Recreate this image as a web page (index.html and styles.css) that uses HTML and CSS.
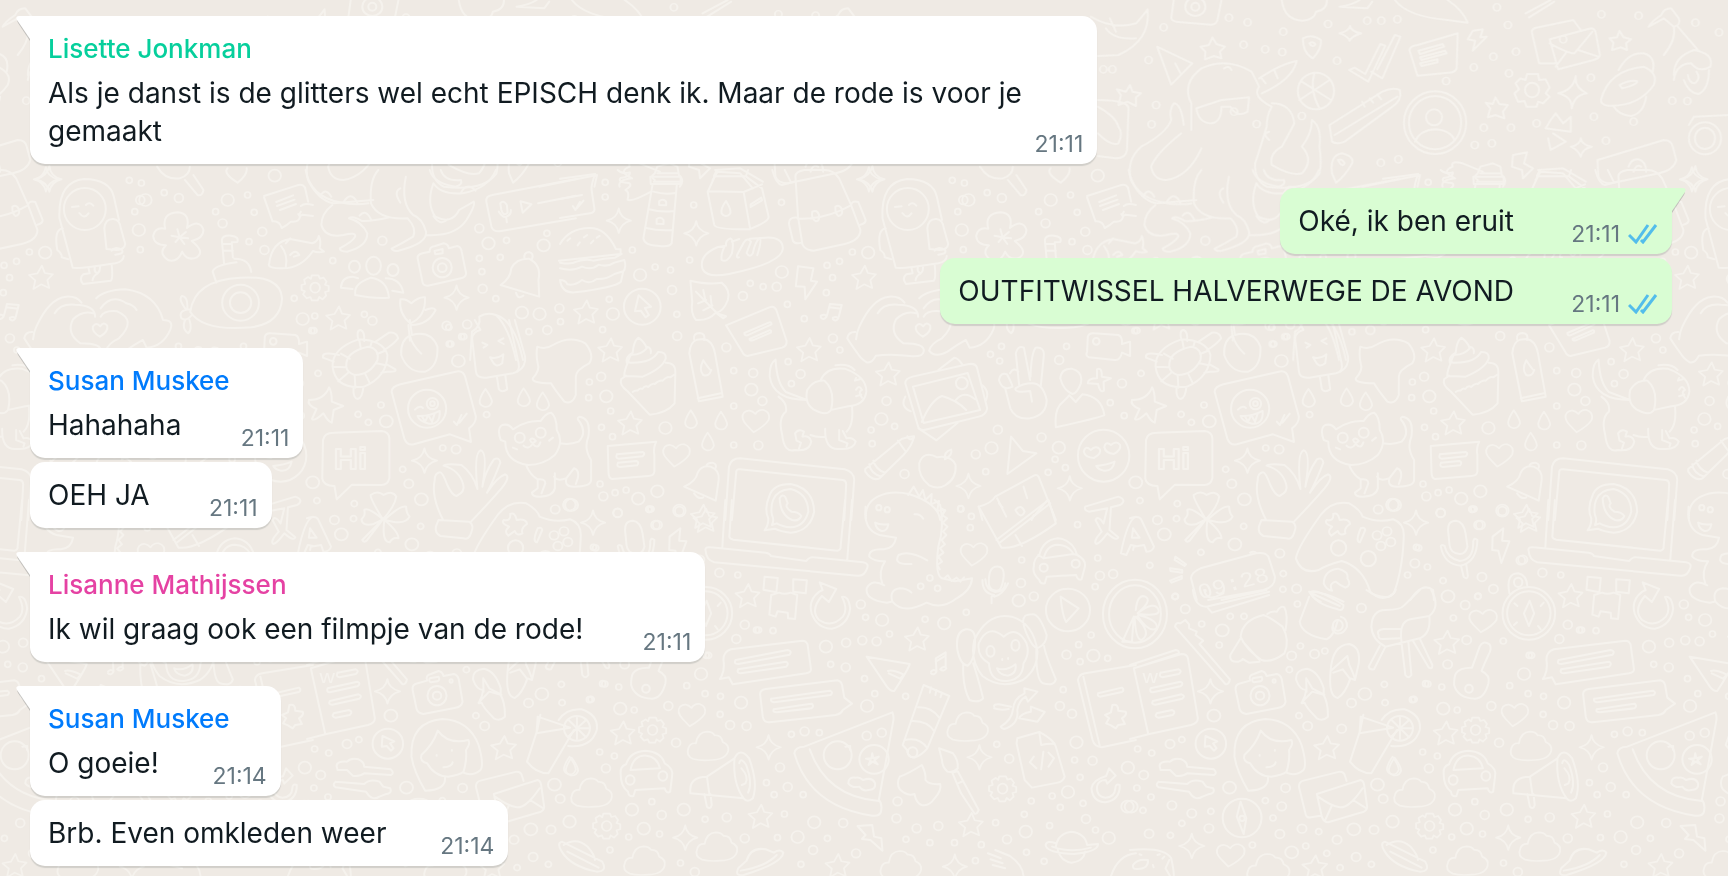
FILE: index.html
```html
<!DOCTYPE html>
<html lang="nl">
<head>
<meta charset="utf-8">
<meta name="viewport" content="width=device-width, initial-scale=1">
<title>Groepschat</title>
<link rel="stylesheet" href="styles.css">
</head>
<body>
<svg class="wallpaper" aria-hidden="true">
  <defs>
    <marker id="dot-s" markerUnits="userSpaceOnUse"><ellipse rx="8" ry="9"/></marker>
    <marker id="dot-m" markerUnits="userSpaceOnUse"><ellipse rx="12" ry="13"/></marker>
    <marker id="dot-l" markerUnits="userSpaceOnUse"><ellipse rx="17" ry="18"/></marker>
    <marker id="dot-w" markerUnits="userSpaceOnUse"><ellipse class="wide" rx="7" ry="11"/></marker>
    <marker id="star" markerUnits="userSpaceOnUse"><path d="M3-36L11-14L33-10L18 7L23 31L1 20L-20 34L-15 8L-32-8L-9-13Z"/></marker>
    <marker id="spark" markerUnits="userSpaceOnUse"><path d="M0-37Q3-8 33 0Q6 7 0 37Q-5 7-33 0Q-5-6 0-37Z"/></marker>
    <marker id="gear" markerUnits="userSpaceOnUse"><path d="M-9-37H9L13-27L23-30L31-18L27-9L37-5V10L27 13L30 24L20 35L11 28L7 38H-9L-13 28L-23 32L-33 20L-28 11L-37 7V-8L-27-11L-30-24L-19-32L-12-26Z"/><ellipse rx="13" ry="15"/></marker>
    <marker id="cloud" markerUnits="userSpaceOnUse"><path d="M-40 39Q-62 30-53 5Q-48-10-33-8Q-28-42-3-43Q12-43 18-32Q36-34 40-12Q58-4 55 14Q50 40 10 42Q-20 45-40 39Z"/></marker>
    <marker id="heart" markerUnits="userSpaceOnUse"><path d="M-2-20Q-18-38-33-24Q-44-8-26 13L-7 35Q25 15 34-2Q40-25 20-32Q6-34-2-20Z"/></marker>
    <marker id="drop" markerUnits="userSpaceOnUse"><path d="M0-27Q17 0 17 12Q12 29-3 26Q-17 21-15 7Q-12-8 0-27Z"/></marker>

    <g id="tile">
      <!-- lighthouse, food, backpack, astronaut, pets -->
      <g transform="translate(560 170) scale(.3673 .3333)">
        <path d="M0 26L96 12Q84 45 86 60L94 118Q93 128 82 130L0 144M0 87L60 75M35 108L42 120L54 96M46 115L64 92"/>
        <path d="M252 43L227 205Q230 226 265 227Q298 233 304 220L318 45M246 20H328L329 42H247ZM254 65Q285 75 314 69M243 118Q275 128 310 123M235 174Q270 184 307 180M270 105V94Q280 84 289 95V106ZM263 161V148Q273 137 282 150V162ZM157 0Q170 14 190 7Q193 20 165 24Q155 37 187 39Q200 45 178 60Q190 65 184 89Q195 97 248 65"/>
        <path d="M402 66L420 165Q425 179 515 178Q570 155 568 140L550 55L506 19L422 18ZM402 64L500 66L550 43M500 66L518 178M419 18L427 0M506 19L512 0M452 93Q470 125 462 133Q450 145 440 130Q437 115 452 93M519 103L548 83L550 91L519 111Z"/>
        <path d="M641 20L648 140L660 223Q667 240 690 242L775 222Q818 210 818 180L792 104L760 25Q745 0 720 0H665Q640 5 641 20M647 146Q720 150 792 106Q795 90 812 96L832 150Q833 160 818 164M647 143Q620 140 624 165L634 212Q640 224 658 218M687 125Q700 118 705 134Q708 153 697 154Q683 145 687 125M750 110Q762 102 768 120Q770 137 758 138Q748 130 750 110M578 0Q588 42 604 45L642 34M612 0L628 35"/>
        <path d="M0 222Q25 175 80 174Q125 173 152 237L165 238V252L-3 272M0 278Q30 285 45 275Q70 265 90 272Q120 264 150 263L168 252M0 295Q35 305 60 290Q85 302 105 284Q130 292 148 278L175 270Q182 290 172 305L166 335Q150 352 40 367Q5 370 0 330Q15 330 20 343Q40 348 60 330Q80 345 100 327Q125 329 148 312L172 304M20 212L28 205M48 226L54 217M65 202L74 195M84 220L91 212M100 203L108 198"/>
        <path d="M388 297Q377 255 430 231L452 227Q450 210 464 205Q475 210 468 250Q455 280 440 270Q437 255 448 229M487 262Q480 265 482 255L500 218Q510 200 520 215L508 249Q517 265 525 250Q531 215 544 204Q550 210 537 256M560 203Q605 200 607 235Q605 280 460 312Q400 325 388 297M468 215L488 207M516 206L560 203"/>
        <path d="M648 289L690 295L683 332L700 335L668 388L666 350L642 349Z"/>
        <path d="M355 332Q405 345 440 338Q465 360 457 390Q445 425 424 429L452 439L444 445L424 428Q405 453 370 450Q355 430 360 395ZM370 365L425 427M390 360L396 392M376 400L398 390M410 378L413 408M390 421L415 407"/>
        <path d="M452 466L570 412Q583 406 589 420L617 513Q618 528 605 533L510 558Q500 557 496 545ZM502 489L568 458Q575 454 576 463L510 496Q502 498 502 489M516 507L570 481Q577 480 574 488L525 511Q516 513 516 507"/>
        <ellipse cx="224" cy="410" rx="50" ry="54"/><path d="M214 376L204 424L220 422L233 442L242 435L231 414L248 410Z"/>
        <path d="M710 437Q722 430 726 440Q718 452 710 443V437M727 436L735 402L767 405L759 440M734 412L765 416M743 443Q754 438 758 445Q750 456 743 448Z"/>
        <path d="M914 293L878 145Q873 35 945 27Q1015 28 1026 80L1040 150M914 293Q930 298 1030 280Q1052 275 1053 258M1006 237L1000 175Q1003 145 1025 147Q1043 150 1045 175L1057 222Q1055 240 1034 240ZM1020 242Q1030 228 1048 240Q1055 252 1030 254M887 175Q862 180 872 240Q885 250 884 262L902 268M912 111L930 109M950 105Q960 94 970 107M932 129Q945 149 957 130M957 294L960 310L943 313Q930 325 942 342L1018 332Q1024 325 1020 283M975 290Q970 305 982 310Q990 303 988 288M968 331Q970 317 982 310"/><ellipse cx="947" cy="117" rx="57" ry="63"/>
        <path d="M1166 176Q1155 130 1200 127Q1235 130 1225 174Q1260 145 1270 180Q1270 205 1238 213Q1275 245 1252 262Q1225 275 1212 245Q1200 278 1175 271Q1145 250 1168 226Q1135 225 1133 198Q1138 170 1166 176M1205 202L1199 178M1205 202L1222 186M1205 202L1228 205M1205 202L1218 222M1205 202L1194 216M1205 202L1183 197"/>
        <path d="M1435 78L1525 46Q1545 40 1548 60L1555 95M1435 82L1458 154Q1478 153 1483 174Q1498 166 1508 155Q1530 158 1533 140L1528 132M1468 96L1514 76M1470 108L1518 89M1478 120L1522 102M1535 125Q1525 145 1540 134L1568 138M1535 108Q1545 98 1568 105"/>
        <path d="M1320 210Q1322 195 1345 197Q1368 200 1362 216L1347 217L1350 262M1320 210L1326 280M1321 222H1347M1324 242H1350M1354 266Q1395 265 1400 306M1305 338L1295 305Q1300 285 1360 277M1234 426Q1245 330 1370 323Q1480 315 1484 385Q1480 460 1400 472Q1270 485 1234 426M1234 418Q1200 420 1210 445Q1225 455 1238 435M1222 418Q1200 385 1212 378Q1228 380 1226 415M1220 450Q1210 475 1228 490Q1240 480 1232 450"/><ellipse cx="1371" cy="398" rx="50" ry="54"/><ellipse cx="1371" cy="398" rx="29" ry="31"/>
        <path d="M182 578Q178 560 198 548Q200 515 213 503Q230 515 236 535Q220 555 195 554M236 530Q250 532 247 550M197 549Q180 575 190 578Q250 580 267 546Q290 545 288 565Q280 595 225 620Q195 618 175 618Q175 600 185 578M288 578Q315 578 314 608L312 700Q290 730 244 734L184 664Q160 645 167 627L180 617M198 666Q205 660 211 662Q218 652 224 657Q232 645 240 651Q250 639 258 642Q270 630 280 632Q292 618 300 622L314 612"/>
        <path d="M352 550Q355 515 373 509L390 507Q415 510 422 550L443 680L378 694ZM365 508Q362 490 380 489Q397 490 392 510M375 685L438 670M390 571Q410 605 412 600Q405 622 390 615Q377 600 390 571"/>
        <path d="M673 690Q580 690 571 620Q570 580 587 569Q590 640 615 666L672 690M595 680Q620 700 615 725Q593 745 605 795Q610 850 640 840Q680 845 684 815Q680 795 660 800L664 785Q650 775 640 790L644 812L656 818L650 838M682 795Q700 803 722 800M722 776Q720 840 760 837Q800 840 805 815Q795 800 780 805L770 783M760 780V810L783 820L780 830M795 710Q800 765 780 785M673 660Q690 630 720 632Q750 660 738 720Q725 740 690 718Q665 700 673 660M710 630Q725 590 775 596Q835 620 834 665Q830 705 785 709L742 719M750 586Q785 580 802 600M806 624L803 632L816 628M806 659Q815 642 822 660Q810 665 822 683M806 679L820 674"/>
        <path d="M806 508Q808 485 815 470Q850 385 896 380Q925 378 938 398M865 430Q880 400 920 404Q975 405 975 440M970 430Q940 420 915 448Q895 490 935 520Q995 520 990 545Q988 560 960 559Q900 550 860 557Q850 580 835 577Q820 568 810 550Q790 520 782 505Q785 485 804 486M978 385Q1000 360 1058 358Q1140 370 1160 450Q1190 450 1180 478Q1160 530 1115 533L1105 510Q1080 525 1055 545Q1020 565 1005 542Q1010 520 1040 505Q1090 450 1035 424Q1000 420 990 440M990 415Q1020 370 1060 400Q1080 405 1088 420M989 469Q978 455 969 470Q965 485 988 500Q1012 484 1008 467Q998 453 989 469"/>
        <path d="M940 640Q940 625 960 620L1110 583Q1130 578 1135 592L1163 715Q1160 735 1140 740L1000 778Q980 785 975 770ZM961 650L1110 609L1144 720L990 759ZM985 756Q1010 690 1040 678Q1080 690 1106 720M1078 690Q1100 660 1130 688M1030 600L1074 563Q1085 565 1095 583M976 775L1025 811L1082 759M940 680Q925 710 955 724M1150 646Q1170 665 1160 690"/><ellipse cx="1094" cy="640" rx="16" ry="18"/>
        <path d="M1212 655L1226 715Q1240 750 1280 745Q1325 735 1325 690Q1315 640 1285 640Q1260 640 1240 655Q1237 670 1280 663L1285 695M1250 645L1241 550Q1246 525 1263 533L1280 630M1281 620Q1283 550 1295 533Q1320 530 1317 560L1309 648M1195 630Q1200 605 1217 613Q1230 640 1232 650Q1205 665 1195 630M1225 610Q1235 590 1248 605"/>
        <path d="M1362 625Q1365 595 1393 596Q1425 605 1418 640Q1408 670 1395 672Q1370 660 1362 625M1350 770Q1345 715 1370 695L1387 676L1404 696L1422 673Q1475 680 1482 735Q1480 740 1350 772"/>
        <path d="M1462 598Q1476 590 1475 620L1500 625L1480 635L1481 662Q1470 670 1465 642L1437 640Q1437 625 1462 625Z"/>
        <path d="M1437 500Q1440 488 1455 490L1520 495Q1532 500 1530 522L1552 515V558L1530 548Q1525 572 1510 570L1440 562Q1430 558 1435 545Z"/><ellipse cx="1460" cy="514" rx="9" ry="10"/>
        <path d="M130 828L262 815Q253 835 257 855V905Q255 918 240 918L142 927Q132 925 132 905ZM155 853L225 846Q234 850 225 859L160 866Q150 865 155 853M158 878L208 873Q217 877 210 886L163 891Q152 890 158 878"/>
        <path d="M338 950Q370 935 375 908Q385 885 410 890Q435 900 432 930L424 992ZM398 889Q400 878 415 878Q430 883 422 898M365 970Q378 990 390 982"/>
        <path d="M450 1050L460 890Q465 865 490 865L775 898Q800 905 801 930L793 1050M468 1050L480 905Q480 897 490 898L770 930Q780 932 779 945L774 1050"/>
        <path d="M831 897L930 807Q950 800 964 799Q960 825 935 855L870 925Q850 935 831 905ZM842 883Q845 910 875 920M853 872Q860 900 885 908M920 812L940 843M946 799Q950 815 964 803"/>
        <path d="M1027 862Q990 840 978 880Q975 920 1005 946Q1030 960 1050 945Q1080 925 1077 885Q1065 855 1027 862M1048 868Q1045 845 1065 839Q1070 855 1048 868"/>
        <path d="M1228 800L1218 912L1297 850L1260 843Z"/>
        <ellipse cx="1480" cy="857" rx="70" ry="78"/><path d="M1426 845Q1430 825 1445 840Q1460 825 1470 838Q1475 850 1454 864Q1430 862 1426 845M1482 832Q1485 812 1500 825Q1515 810 1525 825Q1528 840 1508 852Q1485 850 1482 832M1460 888Q1490 885 1510 875Q1505 905 1480 902Q1465 898 1460 888"/>
        <path d="M833 1050Q828 1000 865 980Q900 960 950 972Q1030 1000 1035 1050M948 975L963 950L978 980L988 960L995 990L1012 972L1010 1003L1032 993L1027 1022L1048 1020L1038 1042"/>
        <path d="M1185 980L1290 917Q1298 912 1303 920L1350 1050M1140 1010Q1175 1000 1185 980M1140 1010L1150 1050M1190 985L1215 1040M1262 950L1272 985M1284 1046L1328 990"/>
        <polyline class="stars" points="827,323 70,427 136,541 190,760 677,540 892,613 388,1040"/>
        <polyline class="sparks" points="160,152 371,190 841,28 1112,948 1388,955"/>
        <polyline class="hearts" points="534,752 318,855"/>
        <polyline class="drops" points="356,748 438,752 402,815"/>
        <polyline class="dots-s" points="123,37 123,81 364,105 603,97 197,240 259,291 301,300 353,270 518,340 553,350 318,433 134,388 619,403 665,446 116,479 796,246 761,274 727,286 742,323 725,368 1068,31 1101,39 1163,68 1083,125 1098,239 1303,125 1408,127 1390,75 1394,215 473,602 621,575 762,540 78,683 80,636 138,723 113,772 143,800 473,708 473,825 630,641 911,769 847,780 850,821 1172,553 1202,529 1197,573 1379,529 1498,698 1536,737 1159,905 1329,907 1348,868 1376,893 109,942 150,968 180,960 242,1018 1091,1016"/>
        <polyline class="dots-m" points="498,378 590,350 305,360 1203,84 1322,160 1430,185 1436,240 1098,90 319,498 453,532 551,693 526,609 540,826 112,620 655,612 889,693 938,912 1132,853 1192,779 1311,802 1530,640 1359,570 118,979 157,1028 325,1023 743,505"/>
        <polyline class="dots-l" points="218,315 144,432 839,248 1112,90 1336,90 1094,180 1464,17 604,306 521,659 126,679 287,774 875,747 1175,834 1358,833 213,986 265,964 26,1004"/>
      </g>

      <!-- laptop, dinosaur, pizza, monkey -->
      <g transform="translate(560 500) scale(.3673 .3333)">
        <path d="M450 0L442 140M468 0L461 110Q462 117 472 119L755 152Q765 150 764 140L776 0M795 0L782 180M396 150Q395 140 410 142L560 158Q572 160 574 168L670 183Q680 170 690 172L825 187Q842 190 836 205Q828 230 810 227L420 187Q398 180 396 150"/>
        <path d="M570 -12Q580-48 628-48Q690-35 692 35Q680 95 628 98Q600 95 585 86L557 91Q568 75 567 55Q555 25 570-12M580 0Q590-30 628-33Q675-20 676 35Q665 80 628 82Q605 80 590 70L577 75Q584 60 577 45Q573 20 580 0M598-5Q605-20 614-8L620 10Q610 20 630 35Q650 35 657 48Q650 65 632 60Q600 45 598-5"/>
        <path d="M832 20Q825 90 870 105L915 113Q910 145 882 148Q840 145 842 170Q855 185 885 184Q865 215 878 252M1000 181Q950 150 922 165Q905 195 957 192M1020 0L1035 15Q1047 80 1030 140Q1020 225 1040 235L1075 244L1122 235Q1120 270 1080 295Q1040 330 998 308Q935 345 905 305Q895 270 925 265Q945 265 957 278M883 256Q850 235 835 265Q830 300 890 308L902 305M965 43Q980 40 989 56M858 68Q870 76 894 73Q890 95 875 93Q860 87 858 68M1038 25L1049 32L1040 45L1054 55L1042 68L1055 80L1043 95L1052 105L1039 120L1048 133L1035 145L1044 158L1030 170L1040 185L1027 195L1034 208M1045 236L1056 226L1066 243L1080 233L1090 245L1100 232"/><ellipse cx="868" cy="23" rx="7" ry="8"/><ellipse cx="891" cy="29" rx="7" ry="8"/>
        <path d="M1140 20L1202 143Q1250 150 1350 70L1330 0M1188 120L1330 0M1195 130L1335 10M1240 105L1258 138M1240 30Q1255 10 1265 35Q1255 60 1240 30M1195 10L1205 22M1290 45L1284 60"/>
        <path d="M1430 20L1520-10Q1545 0 1525 15L1500 22L1496 90L1520 112Q1515 125 1490 100Q1470 130 1460 132Q1450 125 1475 95L1458 60Q1465 45 1480 70L1490 25L1440 35Q1425 30 1430 20M1568 50Q1545 60 1527 160L1542 165L1554 135L1568 138"/>
        <path d="M1290 200Q1290 175 1305 165Q1315 120 1355 115Q1395 118 1408 165Q1435 180 1428 205L1420 238Q1410 243 1405 225L1325 230L1320 250Q1308 253 1305 240Q1285 220 1290 200M1317 175Q1325 135 1355 134Q1385 135 1398 162ZM1302 165L1317 175M1398 162L1410 166"/><ellipse cx="1317" cy="203" rx="11" ry="12"/><ellipse cx="1404" cy="191" rx="11" ry="12"/>
        <path d="M1168 255Q1165 205 1185 200Q1210 195 1208 230Q1203 275 1188 272Q1172 272 1168 255M1150 240Q1150 280 1182 285L1175 290V310M1220 250Q1205 285 1182 290M1158 238Q1160 270 1185 276M1212 250Q1210 275 1185 276"/>
        <path d="M557 230L593 234L589 277L554 269ZM635 238L672 241L669 280L635 275ZM597 278Q610 285 628 278L646 285L640 357L621 355L620 338L592 334L587 350L570 344L575 285Z"/>
        <path d="M706 275Q675 300 685 340Q700 385 740 386Q785 375 790 325Q785 285 768 291Q785 330 770 350Q740 385 705 360Q680 330 713 288L732 306L752 267L707 247L715 270Z"/>
        <path d="M435 537Q450 515 445 480Q445 455 465 448L660 422Q670 422 674 433L683 505Q685 517 670 520L470 553L460 532ZM478 480L620 450Q633 453 625 464L485 492Q472 492 478 480M485 508L615 485Q625 490 616 500L492 520Q480 520 485 508"/>
        <path d="M545 585Q543 570 560 567L755 541Q765 543 768 555L774 593L795 611L770 630Q765 642 750 645L570 667Q555 668 552 650ZM575 596L735 572Q745 577 737 585L583 607Q572 605 575 596M582 628L685 611Q693 618 685 625L590 637Q578 637 582 628"/>
        <path d="M835 470L952 492Q950 505 910 573Q900 575 890 560ZM893 513Q905 508 936 524L926 536L895 520"/>
        <path d="M1010 515Q1018 505 1025 515Q1018 528 1010 520M1025 515L1023 475L1050 457V503M1023 485L1050 467M1035 508Q1045 495 1052 505Q1045 517 1035 508"/>
        <path d="M1128 420Q1115 480 1150 528Q1200 570 1260 540Q1300 510 1300 455Q1290 370 1230 350Q1165 335 1128 420M1208 410Q1165 370 1140 430Q1135 470 1168 490Q1170 545 1215 543Q1260 540 1262 490Q1280 460 1270 430Q1245 375 1208 410M1190 505Q1215 515 1240 493Q1245 520 1220 527Q1195 525 1190 505M1105 388Q1075 395 1082 450Q1090 495 1110 497Q1130 480 1130 420Q1130 385 1105 388M1098 490Q1095 560 1115 600Q1140 610 1152 595Q1140 540 1125 490M1265 350Q1255 360 1270 400Q1290 450 1303 443Q1325 430 1325 405Q1305 340 1285 343Q1265 345 1265 350M1297 447Q1295 540 1315 550Q1345 560 1350 538Q1320 460 1318 438M1204 477V480M1220 474V477"/><ellipse cx="1172" cy="454" rx="11" ry="16"/><ellipse cx="1240" cy="436" rx="11" ry="16"/>
        <ellipse cx="1383" cy="330" rx="60" ry="64"/><path d="M1363 290L1412 325L1378 366Q1367 345 1363 290"/>
        <path d="M990 555L1060 588L1000 745Q985 765 965 773Q945 770 945 750L933 735ZM1010 562L1007 578M1025 570L1022 585M1040 578L1036 592M975 622Q1010 620 1032 652M955 663Q1000 660 1020 695M938 720Q980 710 1000 745"/><ellipse cx="960" cy="757" rx="13" ry="15"/>
        <path d="M638 760Q640 740 665 740L905 637Q910 650 907 665L868 900Q878 910 874 935Q870 950 850 947Q680 920 638 760M680 748Q725 890 868 903"/><ellipse cx="756" cy="766" rx="38" ry="42"/><ellipse cx="855" cy="778" rx="40" ry="43"/><path d="M850 760L853 775L868 770L856 781L865 793L851 785L840 795L846 780L833 776L848 775ZM785 850Q785 830 805 833Q815 830 825 840Q850 830 858 850Q860 870 840 870Q825 875 815 860Q795 865 785 850M777 740L790 738V750"/>
        <path d="M925 830Q950 820 985 795Q997 820 995 840Q1005 855 1035 852Q1040 870 1020 895Q1005 920 985 915Q970 910 965 882Q945 890 925 868Q915 850 925 830"/>
        <path d="M1032 745L1070 760Q1085 780 1083 805Q1070 820 1055 815Q1040 800 1040 780ZM1068 818L1083 814L1140 930Q1135 945 1128 940L1092 880ZM1083 850L1098 843"/>
        <path d="M1182 620Q1180 612 1195 613L1228 620M1182 625Q1200 632 1222 627M1200 680Q1205 690 1215 685Q1250 670 1245 630Q1250 600 1268 590L1274 605L1300 575L1264 565L1265 580Q1235 595 1233 630Q1230 660 1200 680M1250 655L1300 665L1320 636L1282 620V635Q1255 640 1250 655"/>
        <path d="M1245 715L1305 696Q1345 720 1350 740L1374 830Q1370 845 1355 848L1285 863L1265 840L1243 730ZM1305 698L1310 735Q1330 730 1347 732M1290 770L1279 787L1297 805M1330 758L1345 775L1330 800M1316 755L1310 808"/>
        <path d="M1410 540Q1412 523 1430 520L1568 495M1410 540L1450 720Q1455 740 1475 742L1568 720M1425 530L1470 740M1465 580L1530 563Q1538 570 1530 576L1470 590Q1462 588 1465 580M1504 615Q1520 610 1520 632L1540 635Q1545 645 1530 655L1538 672L1520 675L1513 685L1500 676L1487 670L1495 655L1484 645L1500 637Z"/>
        <path d="M1495 805L1487 828Q1450 840 1447 865Q1450 905 1485 907Q1525 900 1524 855Q1512 850 1512 865Q1510 892 1485 893Q1460 890 1462 860Q1465 840 1486 840L1490 851L1513 827Z"/>
        <path d="M400 830L475 775Q490 740 515 775Q540 850 525 895Q510 910 500 895L355 880Q350 830 400 830L407 885M475 775Q470 850 500 895M494 805Q515 830 505 850L495 855M393 883L400 920Q410 930 413 915L410 883M488 790Q492 770 507 795Q525 850 512 878"/>
        <path d="M165 820Q163 800 180 793Q190 755 232 752Q275 755 285 790Q310 805 305 830L300 875Q290 883 285 865L205 870L200 888Q187 892 185 875Q165 860 165 820M192 810Q200 765 235 767Q265 770 272 805Z"/><ellipse cx="191" cy="840" rx="12" ry="14"/><ellipse cx="280" cy="828" rx="12" ry="14"/>
        <path d="M810 978L850 975L855 1010L875 1015L878 1052L845 1020L822 1017L832 1005Z"/>
        <path d="M5 1055Q-10 1030 5 1025L115 1085Q130 1115 100 1115Q30 1100 5 1055M10 1035Q45 1010 75 1040Q95 1065 95 1080M20 1055L105 1103M508 1082Q520 1040 560 1048L582 1058Q600 1045 608 1058Q605 1090 500 1125Q475 1130 485 1105L508 1082M492 1112Q560 1100 590 1065M1350 1040Q1355 1000 1392 995Q1430 1000 1435 1035L1465 1032Q1465 1055 1400 1062Q1325 1060 1322 1035Q1325 1020 1350 1030M1355 1050Q1365 1085 1393 1088Q1425 1085 1430 1055M1340 1040Q1390 1060 1445 1043"/>
        <path d="M1165 1060L1200 1075M1172 1078L1205 1090M1178 1095L1212 1105M1185 1050L1225 1068Q1260 1095 1262 1128M1500 1128Q1520 1065 1568 1060"/>
        <polyline class="stars" points="395,62 510,288 971,418 170,700 545,950 1118,975 755,1098"/>
        <polyline class="sparks" points="90,68 568,742 1142,772 341,1013 1075,1100"/>
        <polyline class="gears" points="252,690 127,978 1205,866"/>
        <polyline class="clouds" points="403,738 86,878 230,1082 1110,680 928,1096 427,1040"/>
        <polyline class="hearts" points="1128,162 360,644"/>
        <polyline class="drops" points="26,797"/>
        <polyline class="dots-s" points="91,142 243,28 484,225 535,390 580,392 832,352 737,493 829,536 857,581 941,589 398,466 345,557 395,581 437,589 436,643 202,630 160,561 116,551 80,599 108,756 148,768 250,905 187,1011 271,1002 136,1050 395,958 562,848 583,884 662,884 611,942 706,698 630,703 994,358 982,259 1007,234 1028,265 1106,337 1091,27 1120,49 1117,83 1257,180 1409,74 1464,174 1457,260 1446,405 1412,434 1416,485 1491,475 1370,569 1189,733 1401,780 1416,832 1340,888 1362,922 1424,910 1283,903 1264,943 1186,968 1147,1034 1074,1028 1007,1028 942,1018 1333,977 1458,990 1318,1084 1270,1057 1131,1082 728,1015 656,1093 328,1089 592,1013 897,402"/>
        <polyline class="dots-m" points="157,39 260,75 434,218 503,374 480,417 779,428 823,421 778,502 862,424 819,313 463,675 508,678 295,618 125,805 277,945 316,728 454,952 599,802 620,861 666,694 835,707 876,698 771,969 806,1060 503,1015 689,1050 916,955 971,985 919,904 1290,289 1255,249 1379,464 1361,618 1223,776 1394,641 1450,782 1217,1018 1470,227 1506,222 1030,978 1432,957 367,1116 375,181"/>
        <polyline class="dots-l" points="26,15 325,32 877,360 1046,370 724,440 384,522 493,608 164,626 836,618 1249,302 1452,467 196,929 337,929 228,986 26,965 692,967 647,1011 1406,727 1383,876 1268,995 1494,1014 1545,920 1546,803"/>
      </g>

      <!-- turtle, speech balloons, kitten, controller, microphone -->
      <g transform="translate(1130 320) scale(.3813 .3333)">
        <path d="M67 140Q65 85 135 58Q200 60 211 105Q210 170 150 200Q75 210 67 140M103 140Q100 95 160 80Q190 85 185 120Q165 165 125 165Q105 158 103 140M89 101L112 116M137 60L141 85M170 65L166 80M203 93L184 102M207 136L182 130M165 190L152 160M127 203L125 166M82 184L108 158M67 140L103 142M135 60Q128 30 141 30Q152 35 150 63M180 65L215 38Q235 35 239 55Q225 75 202 90M70 125L42 113Q38 95 75 103L84 105M209 133L232 148Q235 157 210 155L195 158M122 203Q120 235 133 237Q145 235 148 200"/>
        <path d="M300 101Q275 75 270 47Q245 60 247 105Q265 160 310 155Q345 140 342 80Q325 30 275 45L270 0"/>
        <path d="M440 0L455 30Q435 35 433 55L443 155Q445 175 470 173L540 160Q560 155 555 130L530 0M545 0L572 110Q575 140 552 155M498 170L503 207Q510 220 525 208L520 165M460 68L473 75L463 83M515 55L502 63L516 72M480 112Q500 118 515 103L512 130Q495 145 487 125L480 112"/>
        <path d="M222 215Q222 200 245 193L390 155Q410 150 415 172L443 290Q443 310 425 325L430 366L375 343L280 373Q262 377 255 355ZM290 288Q320 290 348 273Q350 315 320 311Q295 305 290 288M283 269Q295 255 304 264M302 290L310 305L318 285L328 305L335 280M385 305L393 315L405 285M400 308L419 281"/><ellipse cx="315" cy="266" rx="50" ry="57"/><ellipse cx="329" cy="251" rx="15" ry="17"/><ellipse cx="329" cy="251" rx="6" ry="7"/>
        <path d="M604 80Q625 90 645 75Q690 45 730 70Q755 105 740 130Q705 150 705 170V225Q695 255 675 245Q650 210 640 190Q590 190 592 175Q612 150 605 130Q600 100 604 80"/>
        <path d="M508 360Q497 325 512 315Q530 310 540 328Q575 300 613 303Q625 280 640 278Q655 290 655 330Q675 365 650 405Q620 435 580 435Q520 425 520 365ZM575 436Q585 465 605 478V505L590 518Q590 530 610 530Q645 530 650 505V460M605 478Q625 475 625 490L615 520M648 470Q655 485 680 475L700 445Q715 450 710 475L705 492M680 477Q675 500 700 500Q745 500 745 480V420Q725 385 738 350Q745 295 715 290Q705 295 715 305Q735 340 712 365Q690 375 665 370M585 360Q590 350 600 363Q590 375 585 360M568 377Q580 390 592 372M592 372Q605 390 612 367M540 383L551 388M635 362L645 353"/><ellipse cx="558" cy="353" rx="13" ry="15"/><ellipse cx="613" cy="338" rx="13" ry="15"/>
        <path d="M42 360Q45 338 70 338L195 333Q215 335 216 355V475Q212 495 195 495L118 494L78 538L72 498Q42 497 40 475Z"/>
        <text class="balloon-text" x="70" y="448">Hi</text>
        <path d="M357 600Q325 530 335 480Q335 460 348 457Q355 455 368 495Q380 525 392 528Q415 515 410 495Q400 450 358 437Q365 430 405 435Q435 460 447 507M447 507Q437 400 455 391Q475 395 460 500M460 500Q465 460 490 418Q505 410 507 428Q490 480 472 518M472 518Q500 470 520 463Q535 470 510 505Q480 545 430 605M345 600L425 605Q440 615 430 640Q425 660 410 655L350 648Q335 640 338 620Z"/>
        <path d="M199 598Q165 535 167 525Q185 510 201 525Q225 510 234 530Q230 560 199 598M199 598Q160 560 150 570Q155 585 143 598Q145 620 175 612L199 598L145 660Q150 670 158 660ZM203 600Q245 555 260 560Q260 578 269 590Q260 612 225 605L203 600M203 600Q240 635 240 655Q225 650 217 667Q195 665 203 600"/>
        <path d="M435 715Q440 680 500 585Q530 540 575 550Q605 570 610 590Q650 610 690 598Q720 610 718 650Q715 750 692 820Q660 850 630 815Q610 740 555 723Q515 735 495 750Q450 765 435 715M533 582Q545 575 550 600Q575 595 577 612Q560 625 565 640Q550 650 545 633L528 647Q515 635 530 620Q508 610 516 600Q535 605 533 582M605 625Q615 620 617 630L603 667Q590 665 605 625"/><ellipse cx="547" cy="684" rx="20" ry="23"/><ellipse cx="625" cy="716" rx="20" ry="23"/>
        <path d="M835 640Q830 602 855 602Q875 605 880 640L885 680Q880 702 865 702Q840 700 838 675ZM815 680Q825 735 868 737Q910 725 911 660Q902 650 900 665Q902 718 865 723Q832 715 825 678Q815 672 815 680M868 737L875 770Q885 780 886 768L882 733"/>
        <path d="M951 650L979 625L976 662L995 664L974 729L966 692L950 690Z"/>
        <path d="M160 775Q160 758 185 745L330 700Q355 695 363 710L380 770Q382 800 350 810L205 840M160 775L175 840M315 698Q325 692 333 700M240 840L358 810"/>
        <text class="clock-text" x="185" y="838" transform="rotate(-17 185 838)">09:28</text>
        <path d="M119 710L147 733L143 738L117 720ZM105 745L137 750V758L106 753ZM105 782L136 768V776L109 788Z"/>
        <path d="M508 790Q510 750 545 746Q575 755 570 775Q582 795 565 803Q550 795 540 785Q520 790 530 812Q515 810 508 790M0 595Q25 585 30 600L63 680Q60 695 43 695L37 675L10 680L8 690M8 625L25 653H5Z"/>
        <path d="M470 815Q510 815 560 845M470 815Q480 835 500 845M735 840Q765 785 795 810L797 840"/>
        <path d="M5 240Q45 240 58 202Q65 215 65 245L95 258L70 270L65 308Q55 305 43 280Q20 305 13 297L25 267Q0 255 5 240"/>
        <polyline class="sparks" points="308,422"/>
        <polyline class="drops" points="468,234 568,232 618,244"/>
        <polyline class="dots-s" points="29,160 18,32 194,255 134,283 161,307 377,72 411,50 471,284 372,22 356,384 251,448 124,551 122,596 26,542 186,697 298,619 52,736 402,761 401,808 119,829 757,684 780,741 728,765 821,782 902,567 913,828"/>
        <polyline class="dots-m" points="391,388 267,491 72,600 651,568 648,646 674,634 658,678 684,666 437,806 393,700 747,730 923,771 1030,719 919,615 953,807"/>
        <polyline class="dots-l" points="397,123 208,304 300,538 90,643 275,673 15,487 694,555"/>
      </g>

      <!-- book, camera, croissant, chair, compass, key, drink -->
      <g transform="translate(1130 590) scale(.3813 .3333)">
        <path d="M165 0Q170 50 200 50L365 5M205 55L215 68L365 15M195 0Q200 30 225 20L245 10V0"/>
        <path d="M118 110Q120 95 132 100L145 90L155 103V115L175 125L172 135L192 152L182 162L262 268Q260 285 250 282Z"/>
        <path d="M0 225L120 180Q130 182 128 190L10 235M10 235L135 192Q150 192 152 205L178 385Q178 400 160 405L48 433ZM48 433L0 447M80 248L128 238Q138 243 128 252L85 262Q75 260 80 248M54 295L132 275Q143 280 132 289L60 307Q50 306 54 295M60 333L135 313Q147 318 137 326L66 344Q55 344 60 333M70 370L110 360Q122 365 112 375L75 383Q63 380 70 370"/>
        <text class="book-text" x="33" y="280">w</text>
        <path d="M290 140Q295 90 350 75Q365 80 400 110Q420 150 405 190Q370 220 345 210Q305 180 290 140M360 72Q370 62 385 65Q395 45 405 52Q415 75 408 120M296 155L340 210M290 145L263 195Q260 218 285 215L297 208M295 207L312 218L340 215"/>
        <path d="M470 20L445 95Q450 135 515 148Q535 140 545 90M475 5Q490-5 560 45Q560 65 545 58Q480 40 475 5M553 80Q570 85 569 110Q560 135 540 130Q525 120 533 105M480 12L550 48"/><ellipse cx="545" cy="106" rx="13" ry="16"/>
        <path d="M620 0Q650 25 680 20Q690 15 697 0M790 0Q815 50 785 78Q790 130 760 145L670 170Q635 150 633 110Q635 60 670 60Q710 60 720 45L760 0M785 78L735 88Q705 95 712 155M652 135Q645 120 665 117H708M652 135Q650 148 665 147L708 145M655 168L626 230Q628 240 640 238L670 170M712 158L722 255Q730 268 738 255L730 155M742 152L783 232Q793 240 793 225L760 146"/>
        <ellipse cx="1046" cy="70" rx="69" ry="79"/><ellipse cx="1046" cy="70" rx="57" ry="66"/><path d="M1048 32L1060 70L1046 108L1033 70ZM1008 40L1016 48M1085 38L1077 48M1007 105L1015 97M1077 118L1070 108"/><ellipse cx="1018" cy="-23" rx="11" ry="14"/><path d="M995 10Q985-50 1018-50Q1040-45 1042-12"/>
        <path d="M855 250Q865 232 897 233L917 170Q925 150 943 163Q950 175 940 195L930 220L922 243Q945 255 940 280Q930 325 905 326Q860 325 850 285Q850 260 855 250"/><ellipse cx="889" cy="296" rx="10" ry="12"/>
        <path d="M277 300Q275 283 290 280L315 272Q310 255 325 252L345 243Q355 245 358 258L385 252Q395 255 398 268L408 335Q405 350 390 353L305 372Q290 370 287 355ZM322 265L345 260Q350 270 342 274L325 277Q318 273 322 265"/><ellipse cx="341" cy="317" rx="25" ry="29"/><ellipse cx="341" cy="317" rx="11" ry="12"/><ellipse cx="378" cy="273" rx="4" ry="5"/>
        <path d="M436 270Q432 240 465 236Q495 245 508 295V315Q520 340 519 380Q505 395 490 385Q460 350 458 338L450 340Q460 320 462 300Q445 300 436 270M462 265L463 305M464 268L478 295L508 313M450 338L478 305L510 315M526 245Q530 165 575 162Q605 170 600 220L590 270L578 265Q565 310 545 324Q520 320 526 245M527 242L570 198L575 225Q590 260 590 270M533 248L558 238L578 268"/>
        <path d="M605 380L690 413L602 430ZM612 374L604 420L577 515Q600 550 633 550L700 420M660 390Q680 355 720 358Q765 375 760 420Q745 475 685 468"/><ellipse cx="708" cy="415" rx="34" ry="37"/><path d="M708 415V383M708 415L732 390M708 415H741M708 415L732 442M708 415V448M708 415L685 440M708 415L686 390"/>
        <ellipse cx="212" cy="461" rx="40" ry="45"/><path d="M198 438L196 470L209 468L220 482L227 475L218 460L229 454Z"/>
        <path d="M362 563Q365 600 310 602Q280 545 274 500Q270 395 355 387Q425 390 450 465Q465 525 455 540Q435 560 410 548Q420 510 417 480Q430 460 423 450Q370 465 343 422Q330 465 300 495Q295 515 315 520Q335 560 370 560Q400 555 410 545M340 495V497M380 480V482M358 532Q380 530 382 517"/>
        <path d="M78 530Q75 513 105 515Q115 503 135 508Q150 515 150 530L220 538Q230 550 220 555L150 550Q140 560 120 557L105 540L80 540ZM75 575L150 582Q165 565 190 575L200 590L218 595Q225 610 205 613L190 620Q170 635 155 605L75 592Q65 585 75 575"/>
        <path d="M443 590Q443 575 455 572L550 545Q562 545 564 558L568 573M443 590L460 670Q462 685 475 682L500 677M490 612L605 570Q612 572 614 585L622 650Q622 665 605 668L520 697Q508 697 503 680ZM493 620Q530 650 550 652Q575 655 610 595M512 690L530 645M585 630L620 655"/>
        <ellipse cx="294" cy="684" rx="51" ry="58"/><path d="M290 635L305 685L298 732L280 680Z"/><ellipse cx="294" cy="685" rx="7" ry="8"/>
        <path d="M0 780Q90 770 108 805Q115 840 115 858M8 825Q20 805 47 810Q50 835 20 837Q5 838 8 825M103 810L93 835L105 858M25 793L30 795M72 795L78 793M60 825L62 832M90 800L85 806"/>
        <ellipse cx="13" cy="72" rx="84" ry="103"/><ellipse cx="13" cy="72" rx="68" ry="86"/><path d="M15 60Q20 10 40 20Q60 30 20 70M20 70Q65 30 75 60Q80 80 22 72M22 75Q75 90 70 115Q50 130 20 78M15 80Q60 130 30 150Q15 150 12 80M10 80L5 155H-20Z"/>
        <polyline class="stars" points="515,474 484,832 830,158"/>
        <polyline class="sparks" points="211,304 162,768"/>
        <polyline class="hearts" points="265,795 927,92"/>
        <polyline class="clouds" points="363,835"/>
        <polyline class="drops" points="694,530"/>
        <polyline class="dots-s" points="118,20 188,102 234,165 439,42 447,168 418,239 511,183 443,377 57,489 20,477 136,449 18,594 55,621 34,661 136,700 106,736 212,664 355,632 375,684 321,765 461,768 516,790 551,833 633,823 495,725 669,338 667,283 299,79 263,79 745,328 781,282 912,20 848,84 979,153 1053,196 1184,120"/>
        <polyline class="dots-m" points="145,57 484,192 607,54 581,339 555,416 466,408 105,462 36,555 110,646 162,670 50,731 207,715 393,732 398,649 408,594 451,716 664,626 543,749 593,801 640,719 424,197 879,45 883,150 833,223"/>
        <polyline class="dots-l" points="242,121 616,312 220,377 261,593 424,787 587,718 649,584 3,650 834,19"/>
      </g>

      <!-- trainers, ticks, balloons, planets along the top edge -->
      <g transform="translate(940 0) scale(.5026 .3333)">
        <path d="M300 50Q345 90 390 70Q405 45 413 28Q420 120 355 165L314 168M330 85Q345 120 390 115M338 55L350 95M465 0L460 55Q462 65 475 66L540 74Q550 72 552 60L560 0M680 0Q685 60 720 62Q745 60 748 35Q770 30 770 0M795 20Q820 15 835 0M795 20L850 25L860 5M905 0Q930 50 1010 60L1050 68Q1040 30 1010 0"/><ellipse cx="508" cy="20" rx="20" ry="28"/><ellipse cx="508" cy="20" rx="8" ry="12"/>
        <path d="M432 140L502 190L460 254ZM468 190L478 218M722 115Q740 100 758 120Q760 145 742 175Q722 160 722 115M735 130Q742 122 747 133Q742 145 735 130"/>
        <path d="M814 210L825 203L846 222L876 132L886 137L852 245ZM870 208L905 105L916 110L880 235L858 215"/>
        <path d="M934 150Q935 138 950 135L1030 100L1028 205Q1025 218 1010 218L950 227ZM952 152L1000 132L1003 140L955 162ZM955 172L1005 152L1008 160L958 180ZM955 190L990 178V187L958 198Z"/>
        <path d="M1060 92L1080 88L1075 112L1088 110L1060 152L1065 122L1050 118Z"/>
        <path d="M1178 100Q1175 85 1190 82L1260 60L1275 90M1178 100L1192 190L1225 190M1213 118L1295 85Q1303 85 1305 100L1313 165Q1312 175 1300 180L1230 208ZM1213 130Q1250 160 1262 160L1298 95M1225 200L1247 155M1270 150L1310 170"/>
        <path d="M1410 80Q1415 65 1435 45Q1440 25 1455 25L1470 55Q1475 75 1460 80L1440 55ZM1468 80L1508 150M1460 80Q1465 120 1440 165M1315 300Q1330 210 1400 200Q1430 220 1420 255Q1390 320 1330 317Q1315 315 1315 300M1350 210Q1370 155 1400 160Q1425 170 1418 215M1340 318Q1350 345 1375 348Q1400 340 1405 290M1352 255Q1370 240 1387 243Q1390 252 1357 265ZM1460 225Q1460 170 1500 150Q1540 160 1533 200Q1510 220 1495 190Q1465 190 1460 240M1480 240Q1490 280 1510 282Q1530 265 1530 210M1488 225Q1490 250 1502 250Q1515 235 1505 215"/>
        <path d="M500 310Q480 250 520 205Q570 170 620 215L635 260Q620 290 660 320Q650 345 650 380Q640 430 627 490Q625 540 650 560M635 235Q680 190 710 183Q700 240 640 280M640 235L648 250M665 210L672 235M500 310L500 390M510 325L560 300L615 292L612 335Q590 355 578 320L560 320Q560 365 540 370Q515 370 510 325M565 205Q575 195 580 210M485 375Q480 310 465 310Q455 330 460 360Q450 400 400 440Q370 480 380 540Q400 600 430 610L510 600M480 400Q430 460 420 500Q425 540 450 540Q495 530 520 445M655 395Q640 400 655 420M660 310Q700 310 705 370Q695 400 680 440Q655 460 660 495Q700 530 720 520Q745 480 720 440Q740 400 740 360Q760 380 755 440Q760 490 755 520Q730 575 650 560"/>
        <ellipse cx="748" cy="273" rx="36" ry="55"/><path d="M720 245L778 300M745 218Q735 270 755 325M775 240Q755 260 715 300"/>
        <path d="M775 375L880 275Q900 260 915 270Q920 300 900 320L805 425Q790 435 780 425ZM785 405L910 290M840 305L845 320M855 295L862 308M870 283L878 298"/>
        <ellipse cx="985" cy="368" rx="62" ry="94"/><ellipse cx="985" cy="368" rx="52" ry="80"/><ellipse cx="983" cy="352" rx="16" ry="24"/><path d="M945 425Q955 390 985 388Q1015 390 1024 420"/>
        <path d="M1168 222H1190L1192 240L1205 238L1213 262L1205 280L1213 290L1200 310L1190 305L1187 320H1167L1163 303L1150 305L1143 280L1152 268L1145 250L1155 235L1165 240Z"/><ellipse cx="1178" cy="270" rx="14" ry="22"/>
        <path d="M780 520Q775 465 800 460Q825 470 820 490Q805 530 788 548ZM792 480Q800 475 805 490Q800 505 792 480M1140 465L1168 457L1162 490L1180 505L1160 535L1158 510L1138 500Z"/>
        <path d="M1000 560Q995 540 1025 535Q995 515 1020 500Q1015 480 1040 490L1080 515M1070 540Q1060 530 1070 520L1075 500L1100 490L1115 500L1118 525Q1130 540 1120 560M1075 520H1115M1068 545H1122M1190 510L1240 505L1285 545M1185 540L1195 515L1240 520L1265 565M1215 360L1225 340L1240 370L1255 350V395L1205 385ZM1220 400L1245 425L1215 450L1210 415M1308 480L1440 420Q1455 420 1458 440L1465 480Q1460 510 1430 520L1335 550Q1315 550 1310 530ZM1370 500Q1375 475 1390 478Q1405 485 1405 515M1380 515Q1385 490 1395 500M1500 350L1568 345M1490 375L1500 350M840 560L955 525L950 560"/><ellipse cx="1522" cy="415" rx="32" ry="48"/><ellipse cx="1522" cy="415" rx="20" ry="32"/>
        <path d="M80 500Q95 540 125 535Q145 525 145 500M135 540L160 585Q170 590 172 570L152 525M220 505Q210 520 240 548Q260 525 258 505M1165 40L1215 0M1172 52L1222 5"/>
        <path d="M314 300Q380 300 375 330L372 450Q370 475 350 475L314 468M314 320Q350 350 355 380Q365 400 355 430Q340 440 314 400"/>
        <path d="M542 112L550 132L567 140L557 155L560 175L545 168L527 178L528 155L518 140L535 135ZM1352 92L1360 112L1375 118L1365 130L1367 150L1355 142L1337 150L1340 128L1332 115L1347 112ZM1105 292L1113 312L1130 315L1120 335L1123 355L1105 345L1090 352L1095 325L1086 308L1100 312ZM378 255L383 275L400 280L390 292V318L373 305L355 315L360 285L352 268L370 275ZM816 78Q818 95 838 100Q820 108 815 122Q812 108 795 100Q813 93 816 78M1265 228Q1262 262 1287 280Q1262 285 1257 325Q1258 290 1230 280Q1260 270 1265 228M1275 415Q1277 435 1297 440Q1278 445 1275 470Q1270 450 1255 440Q1273 435 1275 415M1503 498Q1505 530 1527 538Q1507 545 1503 575Q1498 545 1475 538Q1498 530 1503 498"/>
        <polyline class="dots-w" points="445,82 575,53 612,67 683,95 604,134 647,148 681,156 772,72 850,62 878,62 910,58 790,182 415,180 325,208 343,208 720,348 421,373 430,315 585,335 630,372 1062,202 1101,170 1130,75 1146,155 1132,220 1108,22 1316,43 1390,47 1240,118 1295,233 1007,243 1082,383 1136,383 1187,370 1301,350 1325,422 1380,365 1457,302 1503,68 1550,97 1487,303 1064,435 1098,430 877,488 912,478"/>
      </g>

      <!-- voice message, fish, people, camera, bell -->
      <g transform="translate(0 170) scale(.3673 .3333)">
        <path d="M832 0Q845 80 925 97Q965 107 1003 100M1030 0Q1005 30 1010 100Q1030 150 1110 145Q1135 175 1125 200Q1095 220 1066 236Q1070 245 1085 242Q1165 220 1160 185Q1150 145 1125 135Q1090 100 1105 20M905 105Q875 130 875 165Q885 205 935 195Q970 185 967 200Q960 215 925 235Q925 245 945 245Q1000 230 1000 190Q985 155 950 145Q960 135 985 153Q1010 155 1060 142M873 77Q885 50 902 80M935 97Q955 60 973 98M1090 55Q1070 65 1090 98M979 137Q995 115 1010 148M1170 0Q1180 40 1240 50Q1260 45 1255 30Q1210 35 1200 0M1180 40Q1200 75 1260 70Q1330 55 1350 0M1180 40Q1160 100 1185 140Q1230 165 1250 120L1290 95Q1295 105 1270 150Q1240 200 1160 195M1180 138Q1200 170 1218 148M1255 68Q1270 35 1295 62"/>
        <path d="M1324 95Q1322 78 1340 75L1568 27M1324 95L1338 170Q1342 185 1360 184L1568 145M1465 100L1568 77M1417 94L1447 103L1423 128ZM1362 100Q1370 88 1380 105L1382 128Q1370 140 1365 120ZM1358 125Q1370 145 1378 140Q1392 135 1391 120M1378 140L1380 157"/>
        <path d="M733 280Q740 215 790 207L850 220Q865 215 868 198Q875 215 870 235L882 245Q865 250 852 243Q820 295 770 295Q725 295 733 280M765 228Q785 255 778 292M778 220L790 205M790 255Q805 235 815 255L800 260"/>
        <path d="M967 368Q965 340 1010 323Q1055 330 1059 383Q1020 387 967 375ZM928 353Q930 320 960 320L975 325M928 353L960 357M1050 325Q1090 325 1098 368L1068 362"/><ellipse cx="1017" cy="287" rx="20" ry="27"/><ellipse cx="965" cy="290" rx="15" ry="18"/><ellipse cx="1070" cy="300" rx="15" ry="18"/>
        <path d="M1137 265Q1135 255 1150 250L1170 245Q1168 230 1185 228L1208 220Q1220 222 1222 235L1245 228Q1255 230 1257 245L1269 310Q1268 322 1255 325L1165 347Q1152 348 1150 335ZM1183 243L1205 237V250L1185 253Z"/><ellipse cx="1204" cy="293" rx="26" ry="29"/><ellipse cx="1204" cy="293" rx="12" ry="13"/>
        <path d="M1363 345Q1390 325 1392 295Q1405 265 1440 266Q1475 285 1466 330L1468 380ZM1428 265Q1425 248 1440 246Q1455 250 1448 268M1405 368Q1410 390 1425 377"/>
        <path d="M1117 460Q1085 430 1090 388Q1105 385 1120 400Q1140 380 1157 382Q1160 440 1117 460M1158 420Q1180 410 1186 420Q1165 465 1120 465M1112 465L1116 512M1280 570L1285 485Q1310 470 1305 440Q1325 425 1350 435Q1385 470 1405 570M1350 435Q1400 450 1424 570"/>
        <polyline class="stars" points="920,445"/>
        <polyline class="sparks" points="1243,383"/>
        <polyline class="gears" points="858,353"/>
        <polyline class="dots-s" points="1379,211 1489,190 1362,262 1305,265 1312,305 1350,386 1257,500 1223,522 1440,485 1526,455 857,438 849,482 992,433 906,272 801,385"/>
        <polyline class="dots-m" points="1041,212 1305,175 1314,356 1216,467 1272,463 1490,480 1014,452 1523,415"/>
        <polyline class="dots-l" points="1330,220 1480,226 824,447 1421,428 1469,432"/>
      </g>
    </g>
  </defs>
  <use href="#tile" x="-1646"/>
  <use href="#tile" x="-823"/>
  <use href="#tile"/>
  <use href="#tile" x="823"/>
</svg>

<svg class="symbols" aria-hidden="true">
  <symbol id="tail" viewBox="0 0 16 26">
    <path class="tail-shade" d="M14 3H3Q0 3 2 7L14 25Z"/>
    <path class="tail-fill" d="M16 0H3Q-1 0 1 4L14 23H16Z"/>
  </symbol>
  <symbol id="ticks" viewBox="0 0 30 20">
    <path d="M1 11L8 18L20 1M13 16L15 18L28 1"/>
  </symbol>
</svg>

<main class="chat">
  <section class="group">
    <article class="bubble first">
      <svg class="tail" aria-hidden="true"><use href="#tail"/></svg>
      <h2 class="author green">Lisette Jonkman</h2>
      <div class="body">
        <p class="text">Als je danst is de glitters wel echt EPISCH denk ik. Maar de rode is voor je gemaakt</p>
        <div class="meta"><time>21:11</time></div>
      </div>
    </article>
  </section>

  <section class="group own">
    <article class="bubble first">
      <svg class="tail" aria-hidden="true"><use href="#tail"/></svg>
      <div class="body">
        <p class="text">Oké, ik ben eruit</p>
        <div class="meta"><time>21:11</time><svg class="ticks" role="img" aria-label="Gelezen"><use href="#ticks"/></svg></div>
      </div>
    </article>
    <article class="bubble">
      <div class="body">
        <p class="text">OUTFITWISSEL HALVERWEGE DE AVOND</p>
        <div class="meta"><time>21:11</time><svg class="ticks" role="img" aria-label="Gelezen"><use href="#ticks"/></svg></div>
      </div>
    </article>
  </section>

  <section class="group">
    <article class="bubble first">
      <svg class="tail" aria-hidden="true"><use href="#tail"/></svg>
      <h2 class="author blue">Susan Muskee</h2>
      <div class="body">
        <p class="text">Hahahaha</p>
        <div class="meta"><time>21:11</time></div>
      </div>
    </article>
    <article class="bubble">
      <div class="body">
        <p class="text">OEH JA</p>
        <div class="meta"><time>21:11</time></div>
      </div>
    </article>
  </section>

  <section class="group">
    <article class="bubble first">
      <svg class="tail" aria-hidden="true"><use href="#tail"/></svg>
      <h2 class="author pink">Lisanne Mathijssen</h2>
      <div class="body">
        <p class="text">Ik wil graag ook een filmpje van de rode!</p>
        <div class="meta"><time>21:11</time></div>
      </div>
    </article>
  </section>

  <section class="group">
    <article class="bubble first">
      <svg class="tail" aria-hidden="true"><use href="#tail"/></svg>
      <h2 class="author blue">Susan Muskee</h2>
      <div class="body">
        <p class="text">O goeie!</p>
        <div class="meta"><time>21:14</time></div>
      </div>
    </article>
    <article class="bubble">
      <div class="body">
        <p class="text">Brb. Even omkleden weer</p>
        <div class="meta"><time>21:14</time></div>
      </div>
    </article>
  </section>
</main>
</body>
</html>
```
FILE: styles.css
```css
* {
  box-sizing: border-box;
}

body {
  margin: 0;
  background: #efeae4;
  color: #111b21;
  font-family: Inter, "Liberation Sans", sans-serif;
}

/* Wallpaper */
.wallpaper {
  position: fixed;
  inset: 0;
  z-index: -1;
  width: 100%;
  height: 100%;
  fill: none;
  stroke: #f5f2ed;
  stroke-width: 2px;
  stroke-linecap: round;
  stroke-linejoin: round;
}

.wallpaper path,
.wallpaper ellipse,
.wallpaper text {
  vector-effect: non-scaling-stroke;
}

.wallpaper marker {
  overflow: visible;
}

.wallpaper marker path,
.wallpaper marker ellipse {
  vector-effect: none;
  stroke-width: 5px;
}

.wallpaper marker .wide {
  stroke-width: 4px;
}

.wallpaper polyline {
  stroke: none;
}

.dots-s { marker: url(#dot-s); }
.dots-m { marker: url(#dot-m); }
.dots-l { marker: url(#dot-l); }
.dots-w { marker: url(#dot-w); }
.stars { marker: url(#star); }
.sparks { marker: url(#spark); }
.gears { marker: url(#gear); }
.clouds { marker: url(#cloud); }
.hearts { marker: url(#heart); }
.drops { marker: url(#drop); }

.balloon-text {
  font: bold 88px "Liberation Sans", sans-serif;
}

.clock-text {
  font: 64px "Liberation Mono", monospace;
  fill: #f5f2ed;
  stroke: none;
}

.book-text {
  font: 56px "Liberation Sans", sans-serif;
  fill: #f5f2ed;
  stroke: none;
}

.symbols {
  display: none;
}

/* Conversation */
.chat {
  display: flex;
  flex-direction: column;
  gap: 24px;
  padding: 16px 56px 10px 30px;
}

.group {
  display: flex;
  flex-direction: column;
  align-items: flex-start;
  gap: 4px;
}

.group.own {
  align-items: flex-end;
}

.bubble {
  position: relative;
  max-width: 65%;
  padding: 14px 18px;
  border-radius: 15px;
  background: #fff;
  box-shadow: 0 2px 1px rgba(11, 20, 26, 0.13);
}

.bubble.first {
  border-top-left-radius: 0;
}

.own .bubble {
  background: #d9fdd3;
}

.own .bubble.first {
  border-top-left-radius: 15px;
  border-top-right-radius: 0;
}

.tail {
  position: absolute;
  top: 0;
  left: -14px;
  width: 16px;
  height: 26px;
  color: #fff;
}

.own .tail {
  left: auto;
  right: -14px;
  color: #d9fdd3;
  transform: scaleX(-1);
}

.tail-shade {
  fill: rgba(11, 20, 26, 0.2);
}

.tail-fill {
  fill: currentColor;
}

.author {
  margin: 0 0 6px;
  font-size: 26px;
  font-weight: 500;
  line-height: 38px;
}

.green { color: #06cf9c; }
.blue { color: #007bfc; }
.pink { color: #e542a3; }

/* The text and the time share one cell; the text reserves room for the time */
.body {
  display: grid;
}

.text,
.meta {
  grid-area: 1 / 1;
}

.text {
  margin: 0;
  font-size: 28px;
  line-height: 38px;
}

.text::after {
  content: "";
  display: inline-block;
  width: 104px;
}

.own .text::after {
  width: 140px;
}

.meta {
  display: flex;
  align-items: center;
  justify-self: end;
  align-self: end;
  gap: 8px;
  margin: 0 -4px -8px 0;
  color: #667781;
  font-size: 23px;
  line-height: 28px;
}

.ticks {
  width: 30px;
  height: 20px;
  fill: none;
  stroke: #53bdeb;
  stroke-width: 3px;
}
```
